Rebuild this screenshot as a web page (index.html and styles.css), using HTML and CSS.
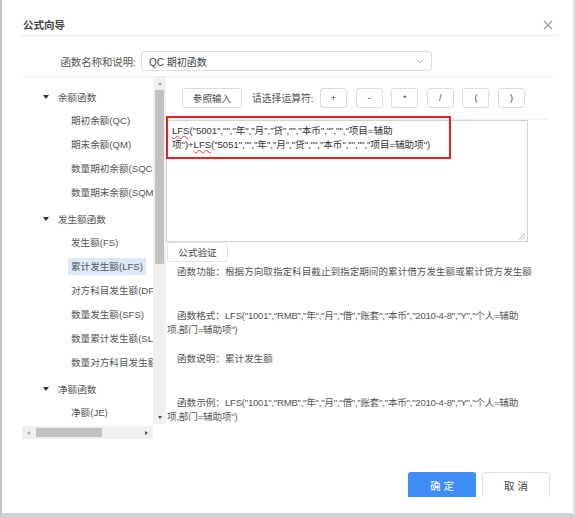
FILE: index.html
```html
<!DOCTYPE html>
<html lang="zh-CN">
<head>
<meta charset="utf-8">
<title>公式向导</title>
<link rel="stylesheet" href="styles.css">
</head>
<body>
<div class="dialog">
  <div class="header">
    <span class="title">公式向导</span>
    <svg class="close" width="10" height="10" viewBox="0 0 10 10"><path d="M1 1L9 9M9 1L1 9" stroke="#9a9a9a" stroke-width="1.1" fill="none"/></svg>
  </div>
  <div class="select-row">
    <span class="label">函数名称和说明:</span>
    <div class="select">
      <span>QC 期初函数</span>
      <svg width="8" height="5" viewBox="0 0 8 5"><path d="M0.5 0.5L4 4L7.5 0.5" stroke="#c0c0c0" stroke-width="0.9" fill="none"/></svg>
    </div>
  </div>
  <div class="main">
    <div class="left">
      <div class="tree-wrap">
        <div class="tree">
          <div class="group">
            <div class="gh"><i class="tri"></i><span>余额函数</span></div>
            <div class="item"><span>期初余额(QC)</span></div>
            <div class="item"><span>期末余额(QM)</span></div>
            <div class="item"><span>数量期初余额(SQC)</span></div>
            <div class="item"><span>数量期末余额(SQM)</span></div>
          </div>
          <div class="group">
            <div class="gh"><i class="tri"></i><span>发生额函数</span></div>
            <div class="item"><span>发生额(FS)</span></div>
            <div class="item"><span class="sel">累计发生额(LFS)</span></div>
            <div class="item"><span>对方科目发生额(DFS)</span></div>
            <div class="item"><span>数量发生额(SFS)</span></div>
            <div class="item"><span>数量累计发生额(SLFS)</span></div>
            <div class="item"><span>数量对方科目发生额(SDFS)</span></div>
          </div>
          <div class="group">
            <div class="gh"><i class="tri"></i><span>净额函数</span></div>
            <div class="item"><span>净额(JE)</span></div>
          </div>
        </div>
        <div class="vscroll">
          <div class="arrow-box"><i class="up"></i></div>
          <div class="vthumb"></div>
          <div class="vspace"></div>
          <div class="arrow-box"><i class="down"></i></div>
        </div>
      </div>
      <div class="hscroll">
        <div class="arrow-box"><i class="lt"></i></div>
        <div class="hthumb"></div>
        <div class="hspace"></div>
        <div class="arrow-box"><i class="rt"></i></div>
      </div>
    </div>
    <div class="right">
      <div class="toolbar">
        <button class="btn ref">参照输入</button>
        <span class="op-label">请选择运算符:</span>
        <button class="btn op">+</button>
        <button class="btn op">-</button>
        <button class="btn op">*</button>
        <button class="btn op">/</button>
        <button class="btn op">(</button>
        <button class="btn op">)</button>
      </div>
      <div class="editor">
        <div class="textarea"><span class="sp">LFS</span>("5001","","年","月","贷","","本币","","","项目=辅助<br>项")+<span class="sp">LFS</span>("5051","","年","月","贷","","本币","","","项目=辅助项")</div>
        <svg class="grip" width="8" height="8" viewBox="0 0 8 8"><path d="M7.5 1L1 7.5M7.5 4.5L4.5 7.5" stroke="#9a9a9a" stroke-width="0.8" fill="none"/></svg>
        <div class="redbox"></div>
      </div>
      <button class="btn verify">公式验证</button>
      <div class="desc">
        <p class="p1">函数功能：根据方向取指定科目截止到指定期间的累计借方发生额或累计贷方发生额</p>
        <p class="p2">函数格式：<span class="code">LFS("1001","RMB","年","月","借","账套","本币","2010-4-8","Y","个人=辅助</span><br><span class="cont">项,部门=辅助项")</span></p>
        <p class="p3">函数说明：累计发生额</p>
        <p class="p4">函数示例：<span class="code">LFS("1001","RMB","年","月","借","账套","本币","2010-4-8","Y","个人=辅助</span><br><span class="cont">项,部门=辅助项")</span></p>
      </div>
    </div>
  </div>
  <div class="footer">
    <button class="fbtn ok">确定</button>
    <button class="fbtn cancel">取消</button>
  </div>
</div>
</body>
</html>
```

FILE: styles.css
```css
* { box-sizing: border-box; }
html, body { margin: 0; padding: 0; background: #fff; }
body {
  font-family: "Liberation Sans", "Noto Sans CJK SC", sans-serif;
  color: #333;
}
.dialog {
  width: 575px;
  height: 518px;
  border-left: 2px solid #c4c4c4;
  border-right: 2px solid #e4e4e4;
  border-bottom: 5px solid #d2d2d2;
  padding: 0 14px 0 19px;
  display: flex;
  flex-direction: column;
  overflow: hidden;
}
.header {
  height: 36px;
  flex: none;
  border-bottom: 1px solid #e9e9e9;
  display: flex;
  align-items: center;
  justify-content: space-between;
  padding: 14px 6px 0 2px;
}
.title {
  font-size: 10.5px;
  font-weight: bold;
  color: #444;
  line-height: 14px;
}
.close { display: block; }
.select-row {
  flex: none;
  display: flex;
  align-items: center;
  margin: 15px 6px 0 2px;
  padding-bottom: 5px;
  border-bottom: 1px solid #ededed;
}
.label {
  width: 113px;
  text-align: right;
  font-size: 10.4px;
  color: #555;
}
.select {
  margin-left: 5px;
  width: 291px;
  height: 20px;
  border: 1px solid #dedede;
  border-radius: 3px;
  display: flex;
  align-items: center;
  justify-content: space-between;
  padding: 0 7px 0 7px;
  font-size: 10px;
  color: #444;
}
.select svg { display: block; }
.main {
  flex: none;
  height: 395px;
  display: flex;
}
.left {
  width: 144px;
  margin-left: 1px;
}
.tree-wrap {
  display: flex;
  height: 347px;
}
.tree {
  width: 131px;
  overflow: hidden;
  padding-top: 9px;
}
.group + .group { margin-top: 4px; }
.gh {
  height: 22px;
  display: flex;
  align-items: center;
  padding-left: 21px;
  font-size: 9.6px;
  color: #555;
  white-space: nowrap;
}
.tri {
  display: block;
  width: 0;
  height: 0;
  border-left: 3px solid transparent;
  border-right: 3px solid transparent;
  border-top: 4px solid #333;
  margin-right: 9px;
}
.item {
  height: 24px;
  display: flex;
  align-items: center;
  padding-left: 46px;
  white-space: nowrap;
  font-size: 9.6px;
  color: #555;
}
.item span {
  padding: 2px 3px;
  line-height: 13px;
}
.item span.sel { background: #dce8fb; }
.vscroll {
  width: 13px;
  background: #f0f0f0;
  display: flex;
  flex-direction: column;
}
.arrow-box {
  width: 13px;
  height: 13px;
  flex: none;
  display: flex;
  align-items: center;
  justify-content: center;
}
.vthumb {
  height: 174px;
  margin: 0 2px;
  background: #c1c1c1;
  flex: none;
}
.vspace, .hspace { flex: 1; }
.up, .down, .lt, .rt { display: block; width: 0; height: 0; }
.up {
  border-left: 2.5px solid transparent;
  border-right: 2.5px solid transparent;
  border-bottom: 3px solid #a3a3a3;
}
.down {
  border-left: 2.5px solid transparent;
  border-right: 2.5px solid transparent;
  border-top: 3px solid #505050;
}
.lt {
  border-top: 2.5px solid transparent;
  border-bottom: 2.5px solid transparent;
  border-right: 3px solid #a3a3a3;
}
.rt {
  border-top: 2.5px solid transparent;
  border-bottom: 2.5px solid transparent;
  border-left: 3px solid #505050;
}
.hscroll {
  width: 131px;
  height: 13px;
  margin-top: 2px;
  background: #f0f0f0;
  display: flex;
  align-items: center;
}
.hthumb {
  width: 66px;
  height: 9px;
  margin-left: 1px;
  background: #c1c1c1;
}
.right { width: 383px; }
.toolbar {
  display: flex;
  align-items: center;
  padding: 11px 0 11px 16px;
  border-bottom: 1px solid #eeeeee;
}
.btn {
  height: 20px;
  border: 1px solid #dcdcdc;
  border-radius: 3px;
  background: #fff;
  font-family: "Liberation Sans", "Noto Sans CJK SC", sans-serif;
  font-size: 9.6px;
  color: #444;
  padding: 0;
  margin: 0;
}
.ref { width: 60px; }
.op-label {
  margin-left: 10px;
  width: 68px;
  font-size: 9.8px;
  color: #555;
  white-space: nowrap;
}
.op {
  width: 27px;
  margin-right: 8.6px;
  font-size: 9px;
}
.editor { position: relative; }
.textarea {
  width: 362px;
  height: 122px;
  border: 1px solid #d2d2d2;
  padding: 3px 5px;
  font-size: 9.6px;
  letter-spacing: -0.05px;
  line-height: 14px;
  color: #333;
  white-space: nowrap;
}
.sp {
  text-decoration-line: underline;
  text-decoration-style: wavy;
  text-decoration-color: #e23c3c;
  text-decoration-thickness: 0.8px;
}
.grip {
  position: absolute;
  left: 352px;
  top: 112px;
}
.redbox {
  position: absolute;
  left: 0;
  top: -4px;
  width: 285px;
  height: 43px;
  border: 2px solid #e8221f;
}
.verify {
  display: block;
  margin-left: 1px;
  width: 61px;
  border-color: #e2e2e2;
}
.desc {
  font-size: 9.6px;
  color: #555;
  line-height: 14px;
  padding-left: 6px;
}
.desc p {
  margin: 0;
  white-space: nowrap;
  text-indent: 5px;
}
.desc .code { letter-spacing: -0.25px; }
.desc .cont { margin-left: -5px; letter-spacing: -0.2px; }
.desc .p1 { margin-top: 3px; }
.desc .p2 { margin-top: 30px; }
.desc .p3 { margin-top: 15px; }
.desc .p4 { margin-top: 30px; }
.footer {
  flex: none;
  height: 25px;
  overflow: hidden;
  display: flex;
  justify-content: flex-end;
  align-items: flex-start;
  padding-right: 9px;
  gap: 6px;
}
.fbtn {
  width: 68px;
  height: 30px;
  border-radius: 3px;
  font-family: "Liberation Sans", "Noto Sans CJK SC", sans-serif;
  font-size: 10.5px;
  letter-spacing: 3px;
  text-indent: 3px;
  padding: 0 0 4px 0;
  margin: 0;
}
.ok {
  background: #3f8ef8;
  border: none;
  color: #fff;
}
.cancel {
  background: #fff;
  border: 1px solid #e2e2e2;
  color: #444;
}
```
